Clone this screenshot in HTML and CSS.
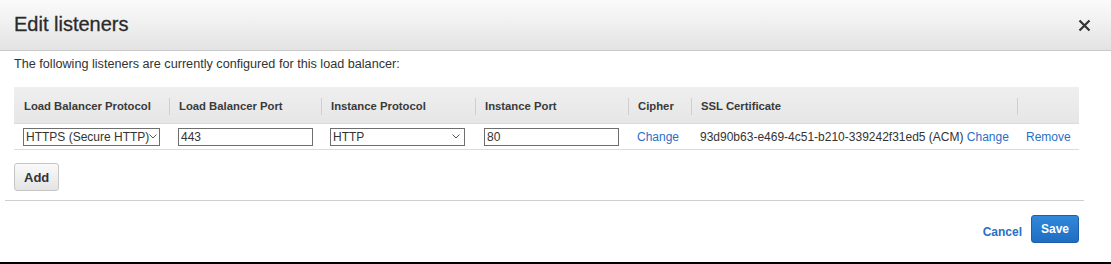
FILE: index.html
```html
<!DOCTYPE html>
<html lang="en">

<head>
  <meta charset="UTF-8">
  <meta name="viewport" content="width=device-width, initial-scale=1.0">
  <title>Edit listeners</title>
  <link rel="stylesheet" href="styles.css">
</head>

<body>
  <div class="modal">
    <div class="modal-header">
      <h1 class="modal-title">Edit listeners</h1>
      <button class="close" type="button" aria-label="Close">
        <svg width="13" height="13" viewBox="0 0 13 13">
          <path d="M1.5 1.5 L11.5 11.5 M11.5 1.5 L1.5 11.5" stroke="#333" stroke-width="2.2" fill="none"/>
        </svg>
      </button>
    </div>

    <div class="modal-body">
      <p class="intro">The following listeners are currently configured for this load balancer:</p>

      <table class="listeners">
        <colgroup>
          <col style="width: 155px">
          <col style="width: 152px">
          <col style="width: 154px">
          <col style="width: 153px">
          <col style="width: 63px">
          <col style="width: 326px">
          <col style="width: 62px">
        </colgroup>
        <thead>
          <tr>
            <th><div class="th-inner first">Load Balancer Protocol</div></th>
            <th><div class="th-inner">Load Balancer Port</div></th>
            <th><div class="th-inner">Instance Protocol</div></th>
            <th><div class="th-inner">Instance Port</div></th>
            <th><div class="th-inner">Cipher</div></th>
            <th><div class="th-inner">SSL Certificate</div></th>
            <th><div class="th-inner"></div></th>
          </tr>
        </thead>
        <tbody>
          <tr>
            <td>
              <select class="field select-lb">
                <option>HTTPS (Secure HTTP)</option>
              </select>
            </td>
            <td><input class="field" type="text" value="443"></td>
            <td>
              <select class="field select-inst">
                <option>HTTP</option>
              </select>
            </td>
            <td><input class="field" type="text" value="80"></td>
            <td><a href="#">Change</a></td>
            <td>93d90b63-e469-4c51-b210-339242f31ed5 (ACM) <a href="#">Change</a></td>
            <td><a href="#">Remove</a></td>
          </tr>
        </tbody>
      </table>

      <button class="btn" type="button">Add</button>
    </div>

    <div class="modal-footer">
      <a href="#" class="cancel">Cancel</a>
      <button class="btn btn-primary" type="button">Save</button>
    </div>
  </div>
</body>

</html>
```

FILE: styles.css
```css
* {
  margin: 0;
  padding: 0;
  box-sizing: border-box;
}

body {
  font-family: 'Liberation Sans', Arial, sans-serif;
  font-size: 12px;
  color: #333;
  background: white;
}

.modal {
  height: 264px;
  border-bottom: 2px solid #000;
}

.modal-header {
  height: 51px;
  display: flex;
  align-items: center;
  justify-content: space-between;
  padding: 0 20px 0 14px;
  background: linear-gradient(#fbfbfb, #e3e3e3);
  border-bottom: 1px solid #c9c9c9;
}

.modal-title {
  font-size: 20px;
  font-weight: normal;
  color: #2b2b2b;
  padding-bottom: 1px;
  -webkit-text-stroke: 0.3px #2b2b2b;
}

.close {
  border: none;
  background: none;
  display: flex;
  cursor: pointer;
}

.modal-body {
  padding: 0 32px 0 14px;
}

.intro {
  font-size: 12.65px;
  line-height: 14px;
  margin-top: 6px;
}

.listeners {
  margin-top: 16px;
  width: 1065px;
  table-layout: fixed;
  border-collapse: collapse;
}

.listeners th {
  background: linear-gradient(#efefef, #e6e6e6);
  text-align: left;
  font-weight: bold;
  font-size: 11.3px;
  color: #3a3a3a;
  padding: 11px 0 8px;
  border-bottom: 1px solid #dcdcdc;
}

.th-inner {
  height: 17px;
  line-height: 17px;
  padding-left: 9px;
  border-left: 1px solid #cfcfcf;
  white-space: nowrap;
}

.th-inner.first {
  border-left: 1px solid transparent;
}

.listeners td {
  height: 26px;
  padding: 4px 0 3px 9px;
  border-bottom: 1px solid #dcdcdc;
  white-space: nowrap;
  line-height: 18px;
}

.listeners a {
  color: #2a6fc6;
  text-decoration: none;
}

.field {
  display: block;
  height: 18px;
  margin-top: -1px;
  border: 1px solid #6e6e6e;
  border-radius: 0;
  font-family: 'Liberation Sans', Arial, sans-serif;
  font-size: 12px;
  color: #333;
  padding: 1px 2px 0;
  background: white;
  outline: none;
}

input.field {
  width: 135px;
}

select.field {
  appearance: none;
  -webkit-appearance: none;
  padding-left: 2px;
  background-image: url("data:image/svg+xml;utf8,<svg xmlns='http://www.w3.org/2000/svg' width='8' height='5' viewBox='0 0 8 5'><path d='M0.5 0.5 L4 4 L7.5 0.5' stroke='%23555' stroke-width='1' fill='none'/></svg>");
  background-repeat: no-repeat;
}

.select-lb {
  width: 137px;
  background-position: right 2px center;
}

.select-inst {
  width: 135px;
  background-position: right 4px center;
}

.btn {
  margin-top: 13px;
  height: 28px;
  padding: 0 9px;
  background: linear-gradient(#fafafa, #e4e4e4);
  border: 1px solid #c6c6c6;
  border-radius: 3px;
  font-family: 'Liberation Sans', Arial, sans-serif;
  font-size: 13px;
  font-weight: bold;
  color: #333;
  cursor: pointer;
}

.modal-footer {
  margin: 9px 27px 0 5px;
  padding: 14px 5px 0 0;
  border-top: 1px solid #cfcfcf;
  display: flex;
  justify-content: flex-end;
  align-items: center;
  gap: 9px;
}

.cancel {
  color: #2a6fc6;
  font-weight: bold;
  text-decoration: none;
  padding-top: 5px;
}

.btn-primary {
  margin-top: 0;
  width: 48px;
  padding: 0;
  font-size: 12px;
  color: white;
  background: linear-gradient(#3288da, #1f6dc2);
  border-color: #1f5fa9;
}
```
